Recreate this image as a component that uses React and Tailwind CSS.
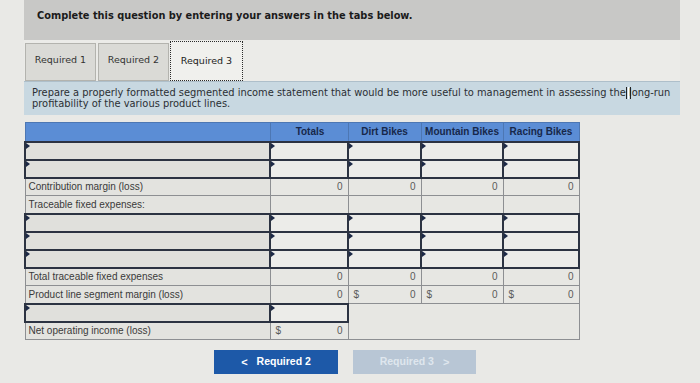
import React from "react";

const inputRow = { type: "input" };

const rows = [
  inputRow,
  inputRow,
  { type: "calc", label: "Contribution margin (loss)", values: ["0", "0", "0", "0"] },
  { type: "calc", label: "Traceable fixed expenses:", values: ["", "", "", ""] },
  inputRow,
  inputRow,
  inputRow,
  { type: "calc", label: "Total traceable fixed expenses", values: ["0", "0", "0", "0"] },
  { type: "calc", label: "Product line segment margin (loss)", values: ["0", "0", "0", "0"], dollars: [false, true, true, true] },
];

const colWidths = ["w-[245px]", "w-[78px]", "w-[73px]", "w-[82px]", "w-[76px]"];

function Flag() {
  return (
    <span className="absolute left-0 top-0 h-0 w-0 border-y-[3px] border-l-[4px] border-y-transparent border-l-[#1c2946]" />
  );
}

function InputCell({ label }) {
  return (
    <td
      className={`relative h-[18px] border-2 border-[#2c3342] p-0 ${
        label ? "bg-[#e0e0dc]" : "bg-[#ecece9]"
      }`}
    >
      <Flag />
    </td>
  );
}

function ValueCell({ value, dollar }) {
  return (
    <td className="h-[18px] border border-[#8d8f92] bg-[#e7e7e3] p-0">
      <div className="flex justify-between px-[5px] text-[#5a5a5a]">
        <span>{dollar ? "$" : ""}</span>
        <span>{value}</span>
      </div>
    </td>
  );
}

export default function App() {
  return (
    <div className="h-[383px] w-[700px] overflow-hidden bg-[#e9e9e6] font-['DejaVu_Sans',sans-serif]">
      <div className="ml-[24px] w-[656px]">
        {/* question banner */}
        <div className="h-[40px] bg-[#c8c8c6] pl-[13px] pt-[9px] text-[9.8px] font-bold text-[#1b1b1b]">
          Complete this question by entering your answers in the tabs below.
        </div>

        {/* tabs */}
        <div className="flex h-[41px] items-end bg-[#ebebe8] pl-[1px]">
          <div className="mr-[2px] flex h-[38px] w-[71px] items-center justify-center border border-[#b3b3ae] bg-[#dadad6] pb-[3px] text-[9.5px] text-[#333]">
            Required 1
          </div>
          <div className="mr-[1px] flex h-[38px] w-[71px] items-center justify-center border border-[#b3b3ae] bg-[#dadad6] pb-[3px] text-[9.5px] text-[#333]">
            Required 2
          </div>
          <div className="flex h-[40px] w-[73px] items-center justify-center border border-dotted border-[#2a2a2a] bg-[#f0f0ed] text-[9.5px] text-[#222]">
            Required 3
          </div>
        </div>

        {/* instructions */}
        <div className="h-[34px] border-t border-[#aebfca] bg-[#c8d8e1] px-[8px] pt-[5px] text-[9.9px] leading-[11px] text-[#2b2f33]">
          Prepare a properly formatted segmented income statement that would be more useful to management in assessing the
          <span className="relative inline-block w-0">
            <span className="absolute left-[0px] top-[-9px] h-[12px] w-[5px] border-x border-[#222]">
              <span className="absolute left-[1px] top-0 h-full w-px bg-white" />
            </span>
          </span>{" "}
          long-run profitability of the various product lines.
        </div>

        {/* segmented income statement */}
        <table className="mt-[7px] border-collapse font-['Liberation_Sans',Arial,sans-serif] text-[10px] text-[#333]">
          <thead>
            <tr className="h-[19px] bg-[#5b8dd5] text-center font-bold text-[#17284a]">
              <th className={`${colWidths[0]} border border-[#4d77b3]`} />
              <th className={`${colWidths[1]} border border-[#4d77b3] pl-[2px]`}>Totals</th>
              <th className={`${colWidths[2]} border border-[#4d77b3]`}>Dirt Bikes</th>
              <th className={`${colWidths[3]} border border-[#4d77b3]`}>Mountain Bikes</th>
              <th className={`${colWidths[4]} border border-[#4d77b3]`}>Racing Bikes</th>
            </tr>
          </thead>
          <tbody>
            {rows.map((row, i) =>
              row.type === "input" ? (
                <tr key={i}>
                  <InputCell label />
                  <InputCell />
                  <InputCell />
                  <InputCell />
                  <InputCell />
                </tr>
              ) : (
                <tr key={i}>
                  <td className="h-[18px] border border-[#8d8f92] bg-[#e3e3df] px-[3px] text-[#3a3a3a]">
                    {row.label}
                  </td>
                  {row.values.map((v, j) => (
                    <ValueCell key={j} value={v} dollar={row.dollars?.[j]} />
                  ))}
                </tr>
              )
            )}
            <tr>
              <InputCell label />
              <InputCell />
              <td colSpan={3} rowSpan={2} className="border border-[#8d8f92] bg-[#e7e7e3]" />
            </tr>
            <tr>
              <td className="h-[18px] border border-[#8d8f92] bg-[#e3e3df] px-[3px] text-[#3a3a3a]">
                Net operating income (loss)
              </td>
              <ValueCell value="0" dollar />
            </tr>
          </tbody>
        </table>

        {/* navigation */}
        <div className="mt-[10px] flex gap-[15px] pl-[190px] font-['Liberation_Sans',Arial,sans-serif] text-[10.5px] font-bold">
          <button className="flex h-[24px] w-[124px] items-center justify-center gap-[9px] bg-[#1d59a8] text-white">
            <span className="text-[11px]">&lt;</span>
            <span>Required 2</span>
          </button>
          <button disabled className="flex h-[24px] w-[123px] items-center justify-center gap-[9px] bg-[#b8c6d5] text-[#dfe6ee]">
            <span>Required 3</span>
            <span className="text-[11px]">&gt;</span>
          </button>
        </div>
      </div>
    </div>
  );
}
